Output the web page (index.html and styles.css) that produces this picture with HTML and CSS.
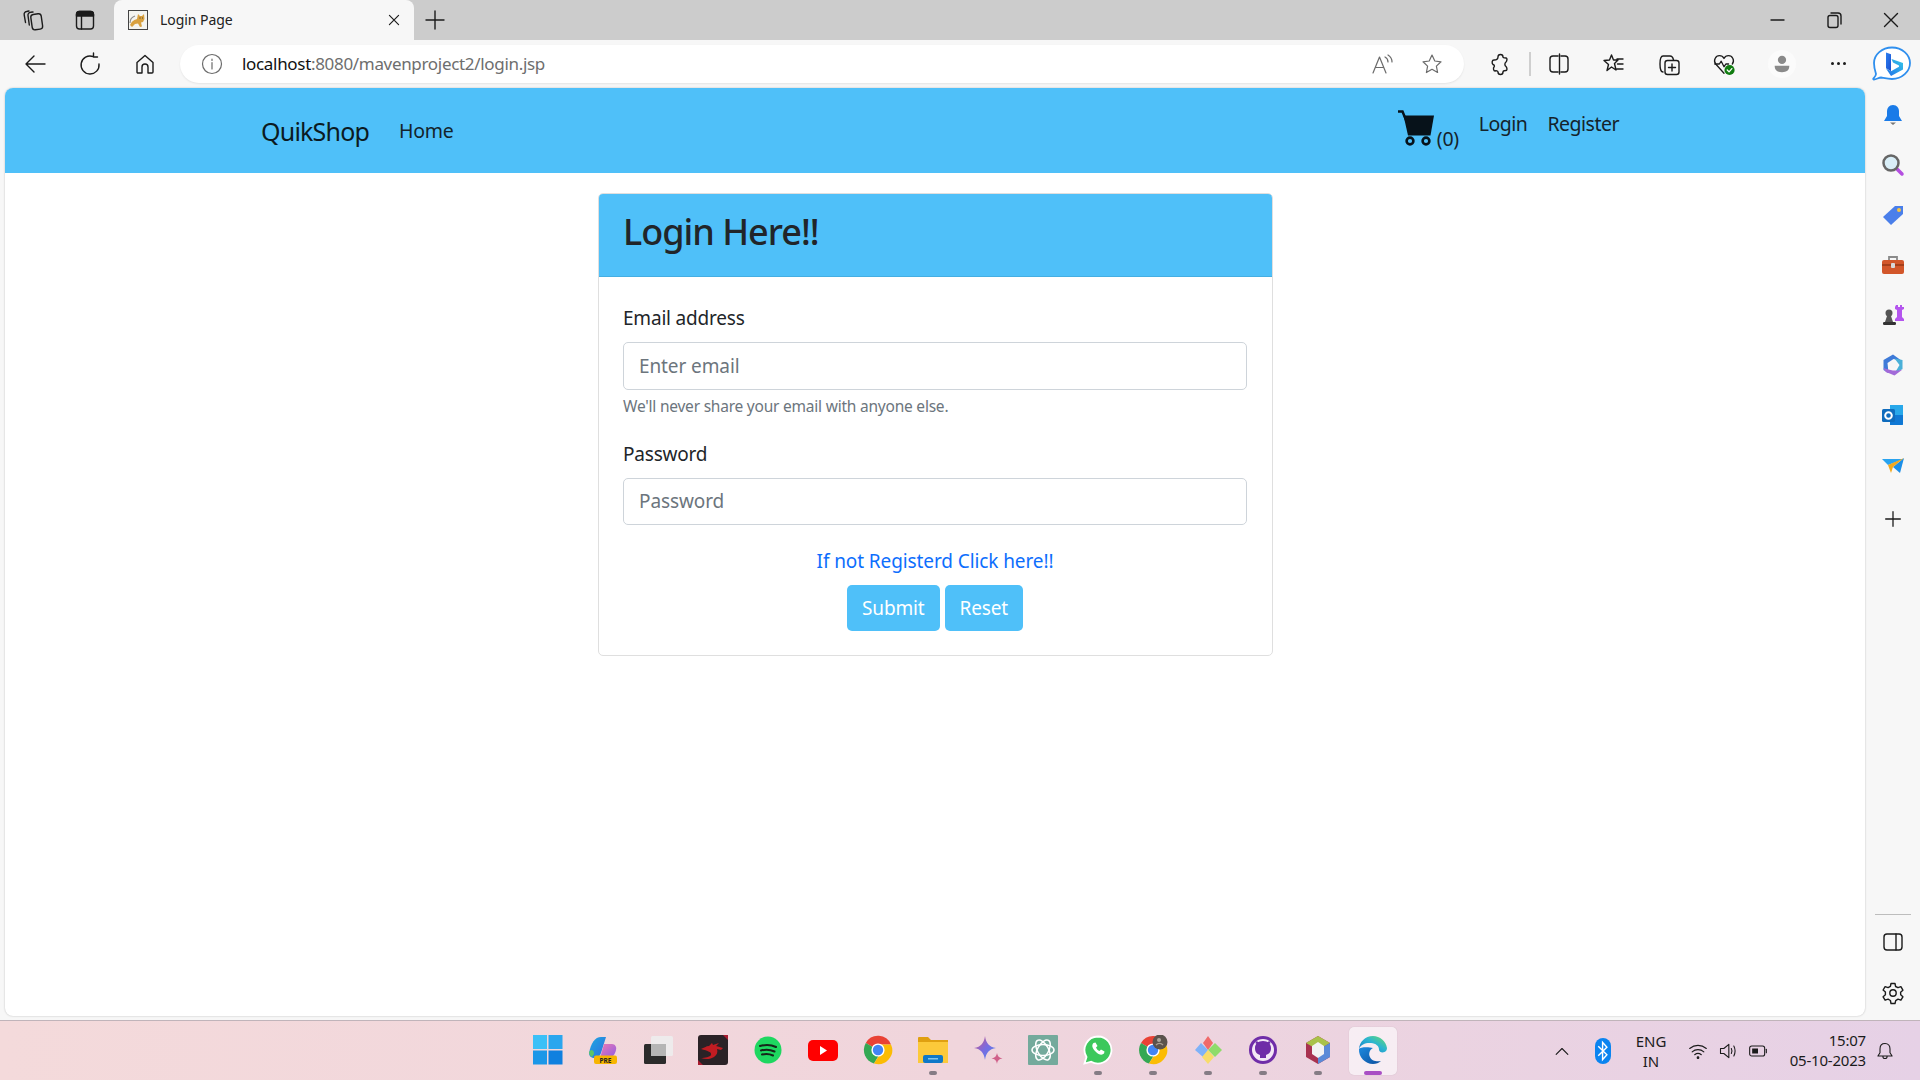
FILE: index.html
```html
<!DOCTYPE html>
<html lang="en">
<head>
    <meta charset="UTF-8">
    <meta name="viewport" content="width=device-width, initial-scale=1.0">
    <title>Login Page</title>
    <link rel="stylesheet" href="styles.css">
</head>
<body>
    <!-- Tab strip -->
    <div class="tabstrip">
        <div class="tab-tools">
            <svg class="ico" viewBox="0 0 24 24"><rect x="10.500" y="6" width="10.500" height="15.500" rx="2.800" transform="rotate(-8 16 14)"/><path d="M12 4 9.500 4.300A2.800 2.800 0 0 0 7 7.500l1.300 9.500"/><path d="M8 3 5.500 3.500A2.800 2.800 0 0 0 3.200 6.800l1.300 7.700"/></svg>
            <svg class="ico" viewBox="0 0 24 24"><rect x="3.500" y="3.500" width="17" height="17.500" rx="3"/><path d="M6.500 3.500h11a3 3 0 0 1 3 3V8h-17V6.500a3 3 0 0 1 3-3z" fill="#1b1b1b"/><path d="M8.500 8v13"/></svg>
        </div>
        <div class="tab">
            <svg class="favicon" viewBox="0 0 20 20"><rect x=".5" y=".5" width="19" height="19" fill="#f4f4f0" stroke="#444"/><path d="M2 15c2-4 4-5 7-6l1-5 2 2h2l2-2 .5 5-1.500 3-2 .5 1 4-2 .5-2-3.500-3 .5-3 3z" fill="#d9a13f"/><path d="M2 13c0-4 2-6 5-7" fill="none" stroke="#8c8c8c" stroke-width="1.200"/><path d="M11.500 8h1M14 8h.8" stroke="#333"/></svg>
            <span class="tab-title">Login Page</span>
            <svg class="ico tab-close" viewBox="0 0 24 24"><path d="m6.500 6.500 11 11M17.500 6.500l-11 11"/></svg>
        </div>
        <svg class="ico tab-new" viewBox="0 0 24 24"><path d="M12 3v18M3 12h18"/></svg>
        <div class="win-controls">
            <svg class="ico" viewBox="0 0 24 24"><path d="M6 12h13"/></svg>
            <svg class="ico" viewBox="0 0 24 24"><rect x="6" y="7.500" width="10" height="12" rx="2"/><path d="M9 5h7a3 3 0 0 1 3 3v8"/></svg>
            <svg class="ico" viewBox="0 0 24 24"><path d="m5.500 5.500 13 13M18.500 5.500l-13 13"/></svg>
        </div>
    </div>

    <!-- Toolbar -->
    <div class="toolbar">
        <div class="nav-btns">
            <svg class="ico" viewBox="0 0 24 24"><path d="M22 12H3M11 4l-8 8 8 8"/></svg>
            <svg class="ico" viewBox="0 0 24 24"><path d="M15 4.500a9 9 0 1 0 6 7.500M15.500 1v4h4"/></svg>
            <svg class="ico" viewBox="0 0 24 24"><path d="M4 10.500 12 3.500l8 7V20a1 1 0 0 1-1 1h-4v-6a3 3 0 0 0-6 0v6H5a1 1 0 0 1-1-1z"/></svg>
        </div>
        <div class="addressbar">
            <svg class="ico ico-grey info" viewBox="0 0 24 24"><circle cx="12" cy="12" r="9.500"/><path d="M12 10.500V17M12 7v1.500"/></svg>
            <span class="url"><span class="url-host">localhost</span>:8080/mavenproject2/login.jsp</span>
            <svg class="ico ico-grey" viewBox="0 0 24 24"><path d="m3 21 6.500-16L16 21M5.500 15.500h8"/><path d="M15 5c2 1 3 3 3 5M18 3c2.500 1.500 4 4 4 7"/></svg>
            <svg class="ico ico-grey star" viewBox="0 0 24 24"><path d="m12 3 2.800 6 6.200.8-4.600 4.300 1.200 6.400-5.600-3.200-5.600 3.200 1.200-6.400L3 9.800 9.200 9z"/></svg>
        </div>
        <div class="tool-btns">
            <svg class="ico" viewBox="0 0 24 24"><path d="M10 5a2.500 2.500 0 0 1 5 0c0 1 2 1 3 1 1.500 0 1 3 0 4-1.500 1-1.500 3.500 0 4.500 1 1 1.500 4 0 4-1.500 0-3 .5-3 1.500a2.500 2.500 0 0 1-5 0c0-1-2-1.500-3-1-1.500 0-2-3-1-4 1-1.200 0-2-1-2.500-1.500-1.500-1-4.500 1-4.500 1.500 0 4 0 4-3z"/></svg>
            <span class="tool-sep"></span>
            <svg class="ico" viewBox="0 0 24 24"><path d="M11 4H6a3 3 0 0 0-3 3v10a3 3 0 0 0 3 3h5M14 4h4a3 3 0 0 1 3 3v10a3 3 0 0 1-3 3h-4M12.500 2v20"/></svg>
            <svg class="ico" viewBox="0 0 24 24"><path d="m9.500 3 2 5H16l-3.500 3.500L14 18l-4.500-3L5 18.500l1.500-6L2 8.500l5.500-.5zM15 7h6M15.500 12h5.500M15 17h6"/></svg>
            <svg class="ico" viewBox="0 0 24 24"><path d="M6 20c-2 0-3-3-3-8 0-5 1-8 3-8h7c2 0 3 1.500 3.500 4"/><rect x="8" y="8.500" width="14" height="14" rx="2.500"/><path d="M15 12v7M11.500 15.500h7"/></svg>
            <svg class="ico" viewBox="0 0 26 26"><path d="M13 23 4 13C1 9 4 4 8 4c2 0 4 1 5 3 1-2 3-3 5-3 4 0 7 5 4 9"/><path d="M3 13h5l2-3 3 6 2-3h3"/><circle cx="19" cy="19.500" r="5.500" fill="#107c10" stroke="none"/><path d="m16.500 19.500 2 2 3-3.500" stroke="#fff"/></svg>
            <span class="avatar"><svg viewBox="0 0 24 24"><circle cx="12" cy="7.500" r="4.500" fill="#8a8a8a"/><path d="M4 14h16c0 5-3 7-8 7s-8-2-8-7z" fill="#8a8a8a"/></svg></span>
            <span class="more"><i></i><i></i><i></i></span>
        </div>
        <svg class="bing" viewBox="0 0 40 36"><defs><linearGradient id="bingB" x1="0" y1="0" x2="1" y2="1"><stop offset="0" stop-color="#2a7ff0"/><stop offset="1" stop-color="#1a4fd0"/></linearGradient><linearGradient id="bingW" x1="0" y1="1" x2="1" y2="0"><stop offset="0" stop-color="#1f6fe8"/><stop offset="1" stop-color="#35c8e8"/></linearGradient></defs><path d="M20 1.500c10 0 18 7 18 15.500s-8 16-18 16c-4 0-8-1-11-1.500-2 0-5 2-7 2-.8 0-1-.6-.5-1.200 1.500-1.500 2.500-3 2.500-4.300C3 25 2 21 2 17 2 8.500 10 1.500 20 1.500z" fill="#fff" stroke="#2f8fee" stroke-width="1.800"/><path d="M14 6.500l5 1.800v17l-5-3z" fill="url(#bingB)"/><path d="M19 25.300l8-4.600v-1.200l-6-3 -1.500-3.500 11.500 4v6.500L19 30l-5-7.500z" fill="url(#bingW)"/></svg>
    </div>

    <!-- Page + sidebar -->
    <div class="workspace">
        <div class="page">
            <nav class="navbar">
                <div class="nav-left">
                    <a class="brand" href="#">QuikShop</a>
                    <a class="nav-link" href="#">Home</a>
                </div>
                <div class="nav-right">
                    <a class="cart" href="#">
                        <svg class="cart-ico" viewBox="0 0 36 36"><path d="M0 1.500h4.500L8 10" fill="none" stroke="#07121a" stroke-width="2.500"/><path d="M5.500 5.500H36L32.500 25.500H10z" fill="#07121a"/><circle cx="12" cy="31" r="3.400" fill="none" stroke="#07121a" stroke-width="2.600"/><circle cx="28" cy="31" r="3.400" fill="none" stroke="#07121a" stroke-width="2.600"/></svg>
                        <span class="cart-count">(0)</span>
                    </a>
                    <a class="nav-link" href="#">Login</a>
                    <a class="nav-link" href="#">Register</a>
                </div>
            </nav>

            <div class="card">
                <div class="card-header">
                    <h2>Login Here!!</h2>
                </div>
                <form class="card-body">
                    <div class="form-group">
                        <label class="form-label" for="email">Email address</label>
                        <input class="form-control" type="email" id="email" placeholder="Enter email">
                        <small class="form-text">We'll never share your email with anyone else.</small>
                    </div>
                    <div class="form-group">
                        <label class="form-label" for="password">Password</label>
                        <input class="form-control" type="password" id="password" placeholder="Password">
                    </div>
                    <div class="register-link"><a href="#">If not Registerd Click here!!</a></div>
                    <div class="form-actions">
                        <button class="btn" type="submit">Submit</button>
                        <button class="btn" type="reset">Reset</button>
                    </div>
                </form>
            </div>
        </div>

        <aside class="sidebar">
            <div class="side-apps">
                <svg class="side-ico" viewBox="0 0 24 24"><path d="M12 2c-4 0-6 3-6 6.500V13l-3 5h18l-3-5V8.500C18 5 16 2 12 2z" fill="#1a7be8"/><path d="M9 19.500h6l-3 2.500z" fill="#777"/></svg>
                <svg class="side-ico" viewBox="0 0 24 24"><path d="m15 15 6 6" stroke="#b44fe0" stroke-width="3.500" stroke-linecap="round"/><circle cx="10" cy="10" r="7.500" fill="#d9eef7" stroke="#666" stroke-width="2.500"/></svg>
                <svg class="side-ico" viewBox="0 0 24 24"><path d="M2 14 14 3h8v8L10 22z" fill="#4a7fea"/><circle cx="18" cy="7" r="2" fill="#f6c544"/></svg>
                <svg class="side-ico" viewBox="0 0 24 24"><path d="M8 7V4h8v3" fill="none" stroke="#8a8a8a" stroke-width="1.800"/><rect x="1" y="7" width="22" height="14" rx="2" fill="#d2562a"/><path d="M1 11h22v2H1z" fill="#a63f1a"/><rect x="10" y="10" width="4" height="5" rx="1" fill="#d8d8d8"/></svg>
                <svg class="side-ico" viewBox="0 0 24 24"><path d="M15 2h2v2h2V2h2v2h2v2l-2 1v7l2 2v2h-9v-2l2-2V7l-2-1V4z" fill="#b455ee"/><circle cx="8" cy="10" r="3.500" fill="#555"/><path d="M6 13h4l2 6H4z" fill="#555"/><rect x="2" y="19" width="13" height="3" rx="1.200" fill="#333"/></svg>
                <svg class="side-ico" viewBox="0 0 24 24"><path d="M12 1.500 2.500 7v10l5 3-1-10 6-4 8.500 2z" fill="#3e7ad8"/><path d="m21.500 7-8-1.500 5 6.500-5 8.500 8-4.500z" fill="#4ab0d8"/><path d="M2.500 15c1 3 3 5 5 5l6 2.500 8-6c-5 2-13 1-19-1.500z" fill="#a26ad8"/><circle cx="12" cy="12" r="3.500" fill="#f5f5f5"/></svg>
                <svg class="side-ico" viewBox="0 0 24 24"><path d="M9 2h13v19a1 1 0 0 1-1 1H9z" fill="#28a8ea"/><path d="m9 12 13 0v9a1 1 0 0 1-1 1H9z" fill="#0f78d4"/><rect x="1" y="6" width="13" height="13" rx="1.500" fill="#0f6cbd"/><circle cx="7.500" cy="12.500" r="3.300" fill="none" stroke="#fff" stroke-width="2"/></svg>
                <svg class="side-ico" viewBox="0 0 24 24"><path d="M1 6h22L7 12z" fill="#29a3ef"/><path d="m23 5-4 15-7-6z" fill="#1c8fe8"/><path d="m23 5-16 7 3 8 2-6z" fill="#f2a91e"/></svg>
                <svg class="ico side-plus" viewBox="0 0 24 24"><path d="M12 4v16M4 12h16"/></svg>
            </div>
            <div class="side-bottom">
                <span class="side-sep"></span>
                <svg class="ico" viewBox="0 0 24 24"><rect x="3" y="4" width="18" height="16" rx="3"/><path d="M15 4v16"/></svg>
                <svg class="ico" viewBox="0 0 24 24"><circle cx="12" cy="12" r="3.200"/><path d="M10 2.500h4l.6 3 2.400 1.200 2.900-1 2 3.500-2.300 2 .1 2.600 2.200 2-2 3.400-2.900-1-2.300 1.400-.7 2.900h-4l-.6-3-2.300-1.300-3 1-2-3.400 2.300-2V11L2.100 9l2-3.400 3 1L9.400 5.300z"/></svg>
            </div>
        </aside>
    </div>

    <!-- Windows taskbar -->
    <footer class="taskbar">
        <div class="task-spacer"></div>
        <div class="task-apps">
            <div class="task-app"><svg viewBox="0 0 30 30"><rect width="14" height="14" fill="#3cc0f7"/><rect x="15.500" width="14" height="14" fill="#2aa6ee"/><rect y="15.500" width="14" height="14" fill="#1c97e8"/><rect x="15.500" y="15.500" width="14" height="14" fill="#0f80df"/></svg></div>
            <div class="task-app"><svg viewBox="0 0 30 30"><defs><linearGradient id="copA" x1="0" y1="0" x2="1" y2="1"><stop offset="0" stop-color="#1fa8e0"/><stop offset="1" stop-color="#2f6fe0"/></linearGradient><linearGradient id="copB" x1="0" y1="0" x2="1" y2="1"><stop offset="0" stop-color="#f07ab0"/><stop offset="1" stop-color="#8c5ce8"/></linearGradient></defs><path d="M1 18C3 8 7 2 13 2h5l-5 16c-1 3-3 5-6 5-4 0-6-2-6-5z" fill="url(#copA)"/><path d="M3 15c2 0 3 1 3 4l-2 3c-2-1-3-3-3-5z" fill="#5cc46a"/><path d="M16 9h8c3 0 5 3 4 6-1 5-4 8-9 8h-7z" fill="url(#copB)"/><rect x="6" y="20.500" width="23" height="8.500" rx="2" fill="#f7b500"/><text class="pre" x="17.500" y="27.600" text-anchor="middle">PRE</text></svg></div>
            <div class="task-app"><svg viewBox="0 0 30 30"><rect x="1" y="9" width="22" height="20" rx="1.500" fill="#2b2b2b"/><rect x="8" y="1" width="22" height="20" rx="1.500" fill="#ededed" fill-opacity=".9"/><rect x="8" y="9" width="15" height="12" fill="#b5b5b5"/></svg></div>
            <div class="task-app"><svg viewBox="0 0 30 30"><rect width="30" height="30" rx="3" fill="#2a2226"/><path d="M3 14c3-1 5-3 8-3l3-3 1 2 6-2-3 3 7 2-2 2-4-1c1 3 0 6-3 8-3 2-8 3-13 1 4 0 9-1 10-3 1-3-3-4-10-6z" fill="#c01c22"/><path d="M25 0h5v5zM0 25l5 5H0z" fill="#a81c30"/></svg></div>
            <div class="task-app"><svg viewBox="0 0 30 30"><circle cx="15" cy="15" r="13.500" fill="#1ed760"/><path d="M7 11c6-1.800 11-1.500 16 1M8 15.500c5-1.500 9-1.200 13.500 1M9 19.500c4-1 7.500-.8 11 1" fill="none" stroke="#16251a" stroke-width="2" stroke-linecap="round"/></svg></div>
            <div class="task-app"><svg viewBox="0 0 30 30"><rect y="5" width="30" height="21" rx="5" fill="#f00"/><path d="m12 11 7 4.500-7 4.500z" fill="#fff"/></svg></div>
            <div class="task-app"><svg viewBox="0 0 30 30"><path d="M15 15 2.800 8A14 14 0 0 1 28 9.500H15z" fill="#e94235"/><path d="M15 15 2.800 8A14 14 0 0 0 11 28.500l6-10z" fill="#34a853"/><path d="M15 9.500h13A14 14 0 0 1 11 28.500l7-11z" fill="#fbbc04"/><circle cx="15" cy="15" r="6.600" fill="#fff"/><circle cx="15" cy="15" r="5.200" fill="#4285f4"/></svg></div>
            <div class="task-app task-app-open"><svg viewBox="0 0 30 30"><path d="M0 3a1 1 0 0 1 1-1h9l3 3h17v5H0z" fill="#e0a010"/><path d="M0 7h30v21H0z" fill="#fcc93a"/><rect x="5" y="20" width="20" height="8" rx="2" fill="#0f78c8"/><rect x="10" y="23" width="10" height="1.500" fill="#7fc4ee"/></svg></div>
            <div class="task-app"><svg viewBox="0 0 30 30"><defs><linearGradient id="gem" x1="0" y1="0" x2="1" y2="1"><stop offset="0" stop-color="#d8587a"/><stop offset=".5" stop-color="#7a6be0"/><stop offset="1" stop-color="#4a8af0"/></linearGradient></defs><path d="M12 1c1 7 4 11 11 12-7 1-10 5-11 12-1-7-4-11-11-12 7-1 10-5 11-12z" fill="url(#gem)"/><path d="M24 18c.5 3 2 5 5.500 5.500-3.500.5-5 2-5.500 5.500-.5-3.500-2-5-5.500-5.500 3.500-.5 5-2.500 5.500-5.500z" fill="#d0608a"/></svg></div>
            <div class="task-app"><svg viewBox="0 0 30 30"><rect width="30" height="30" rx="1" fill="#74aa9c"/><g fill="none" stroke="#fff" stroke-width="1.500"><ellipse cx="15" cy="15" rx="11" ry="5.500"/><ellipse cx="15" cy="15" rx="11" ry="5.500" transform="rotate(60 15 15)"/><ellipse cx="15" cy="15" rx="11" ry="5.500" transform="rotate(120 15 15)"/></g></svg></div>
            <div class="task-app task-app-open"><svg viewBox="0 0 30 30"><path d="M15 1.500a13.500 13.500 0 0 0-11.500 20.500L1.500 28.500l6.700-1.800A13.500 13.500 0 1 0 15 1.500z" fill="#3cc85c" stroke="#fff" stroke-width="1.800"/><path d="M10.500 8c-2 2-1.500 5 2 8.500s6.500 4 8.500 2l.5-2-3.500-2-1.500 1.500c-1.500-.5-3-2-3.500-3.500l1.500-1.500-2-3.500z" fill="#fff"/></svg></div>
            <div class="task-app task-app-open"><svg viewBox="0 0 30 30"><path d="M15 15 3 8A14 14 0 0 1 28 9.500H15z" fill="#e94235"/><path d="M15 15 3 8A14 14 0 0 0 11 28.500l6-10z" fill="#34a853"/><path d="M15 9.500h13A14 14 0 0 1 11 28.500l7-11z" fill="#fbbc04"/><circle cx="15" cy="15" r="6.600" fill="#fff"/><circle cx="15" cy="15" r="5.200" fill="#4285f4"/><circle cx="22" cy="7" r="7.500" fill="#5a524c"/><circle cx="21" cy="5" r="2" fill="#b0a89c"/><path d="M18 10c2-2 5-2 7 0" stroke="#a89c90" stroke-width="1.500" fill="none"/></svg></div>
            <div class="task-app task-app-open"><svg viewBox="0 0 30 30"><path d="m15 1 5 7-5 7-5-7z" fill="#f06a6a"/><path d="m8 8 7 7-5 7-8-7z" fill="#7fb2f8"/><path d="m22 8 7 7-7 7-7-7z" fill="#8edc6a"/><path d="m15 15 6 7-6 7-6-7z" fill="#f8dc6a"/></svg></div>
            <div class="task-app task-app-open"><svg viewBox="0 0 30 30"><circle cx="15" cy="15" r="14" fill="#6f2da8"/><circle cx="15" cy="15" r="11" fill="#f3e8f5"/><path d="M15 6c-5 0-8 3-8 7 0 4 2 6 5 7v3h6v-3c3-1 5-3 5-7 0-4-3-7-8-7z" fill="#6f2da8"/><path d="M8 7l3 2M22 7l-3 2" stroke="#6f2da8" stroke-width="2.500"/></svg></div>
            <div class="task-app task-app-open"><svg viewBox="0 0 30 30"><path d="m15 1 12 7v14l-12 7L3 22V8z" fill="#a83250"/><path d="m15 1 12 7-12 7L3 8z" fill="#a9c24a"/><path d="m27 8v14l-12 7V15z" fill="#5a8ad8"/><path d="m15 7 6 4v8l-6 4-6-4v-8z" fill="#f2f2f2"/></svg></div>
            <div class="task-app task-app-active"><svg viewBox="0 0 30 30"><defs><linearGradient id="edgeTop" x1="0" y1="1" x2="1" y2="0"><stop offset="0" stop-color="#1577c8"/><stop offset=".55" stop-color="#2cb5d0"/><stop offset="1" stop-color="#6ade6a"/></linearGradient><linearGradient id="edgeLow" x1="0" y1="0" x2="1" y2="1"><stop offset="0" stop-color="#1d8be0"/><stop offset="1" stop-color="#0c4f9e"/></linearGradient></defs><path d="M15 1C7 1 1.500 7 1 14c2-5 7-6.500 12-6 5 .5 8 3 8 6.500 0 2.500 3 3.500 5.500 2.500 2-1 2.500-2.500 2.500-4C28 6 22 1 15 1z" fill="url(#edgeTop)"/><path d="M1 14c-.5 8 6 15 14 15 3 0 6-1 8-3-4 1-10 0-11.500-5-1-3.500 1-7 3.500-8-5-1.500-13-1-14 1z" fill="url(#edgeLow)"/></svg></div>
        </div>
        <div class="tray">
            <svg class="ico ico-tray" viewBox="0 0 24 24"><path d="m5 16 7-7 7 7"/></svg>
            <span class="bluetooth"><svg viewBox="0 0 14 24"><path d="m3 7.500 8 8L7 20V4l4 4.500-8 8" fill="none" stroke="#fff" stroke-width="1.300"/></svg></span>
            <div class="lang"><span>ENG</span><span>IN</span></div>
            <div class="tray-status">
                <svg class="ico ico-tray" viewBox="0 0 24 24"><path d="M2 9c6-5 14-5 20 0M5 13c4-3.500 10-3.500 14 0M8 16.500c2.500-2 5.500-2 8 0"/><circle cx="12" cy="20" r="1" fill="#1b1b1b"/></svg>
                <svg class="ico ico-tray" viewBox="0 0 24 24"><path d="M3 9v6h4l6 5V4L7 9zM16 9c1 2 1 4 0 6M19 6c2 4 2 8 0 12"/></svg>
                <svg class="ico ico-tray" viewBox="0 0 24 24"><rect x="2" y="6" width="18" height="12" rx="2.500"/><rect x="5" y="9" width="7" height="6" fill="#1b1b1b" stroke="none"/><path d="M22 10v4"/></svg>
            </div>
            <div class="clock"><span>15:07</span><span>05-10-2023</span></div>
            <svg class="ico ico-tray" viewBox="0 0 24 24"><path d="M12 3c-4 0-6 3-6 6.500V14l-2.500 4h17L18 14V9.500C18 6 16 3 12 3zM9.500 18.500a2.500 2.500 0 0 0 5 0"/></svg>
        </div>
    </footer>
</body>
</html>
```

FILE: styles.css
```css
* {
    box-sizing: border-box;
}

html, body {
    height: 100%;
}

body {
    margin: 0;
    display: flex;
    flex-direction: column;
    height: 1080px;
    overflow: hidden;
    background-color: #f7f7f7;
    font-family: "Noto Sans", Arial, sans-serif;
    color: #212529;
}

a {
    text-decoration: none;
}

.ico {
    width: 24px;
    height: 24px;
    flex: none;
    fill: none;
    stroke: #1b1b1b;
    stroke-width: 1.4;
    stroke-linejoin: round;
    stroke-linecap: round;
}

.ico-grey {
    stroke: #6b6b6b;
    stroke-width: 1.2;
}

/* Tab strip */
.tabstrip {
    height: 40px;
    flex: none;
    display: flex;
    align-items: center;
    background-color: #cccccc;
}

.tab-tools {
    display: flex;
    width: 114px;
    padding-left: 21px;
    gap: 28px;
}

.tab {
    width: 300px;
    height: 40px;
    display: flex;
    align-items: center;
    padding-left: 14px;
    background-color: #f7f7f7;
    border-radius: 8px 8px 0 0;
}

.favicon {
    width: 20px;
    height: 20px;
    margin-right: 12px;
}

.tab-title {
    flex: 1;
    padding-bottom: 2px;
    font-size: 14px;
    letter-spacing: -0.05px;
    color: #222;
}

.tab-close {
    width: 20px;
    height: 20px;
    margin-right: 10px;
}

.tab-new {
    margin-left: 9px;
}

.win-controls {
    margin-left: auto;
    display: flex;
    gap: 33px;
    padding-right: 17px;
}

/* Toolbar */
.toolbar {
    height: 48px;
    flex: none;
    display: flex;
    align-items: center;
    padding-bottom: 1px;
    background-color: #f7f7f7;
}

.nav-btns {
    width: 180px;
    display: flex;
    gap: 31px;
    padding-left: 23px;
}

.addressbar {
    width: 1284px;
    height: 38px;
    margin-top: 1px;
    display: flex;
    align-items: center;
    padding: 0 20px 0 20px;
    background-color: #fff;
    border-radius: 19px;
    box-shadow: 0 1px 2px rgba(0, 0, 0, 0.08);
}

.info {
    margin-right: 18px;
}

.url {
    flex: 1;
    padding-bottom: 2px;
    font-size: 17px;
    letter-spacing: -0.32px;
    color: #6e6e6e;
}

.url-host {
    color: #111;
}

.addressbar .star {
    margin-left: 26px;
}

.tool-btns {
    display: flex;
    align-items: center;
    padding-left: 24px;
    gap: 31px;
}

.tool-sep {
    width: 2px;
    height: 24px;
    margin: 0 -15px 0 -14px;
    background-color: #cfcfcf;
}

.avatar {
    width: 28px;
    height: 28px;
    margin-left: 1px;
    border-radius: 50%;
    background-color: #fbfbfb;
    display: flex;
    padding: 3px;
}

.more {
    display: flex;
    gap: 3px;
    margin-left: 4px;
}

.more i {
    width: 3px;
    height: 3px;
    border-radius: 50%;
    background-color: #1b1b1b;
}

.bing {
    width: 40px;
    height: 36px;
    margin-left: auto;
    margin-right: 8px;
}

/* Page area */
.workspace {
    flex: 1;
    display: flex;
    padding-left: 5px;
    padding-bottom: 4px;
}

.page {
    width: 1860px;
    background-color: #fff;
    border-radius: 8px;
    overflow: hidden;
    box-shadow: 0 0 2px rgba(0, 0, 0, 0.25);
}

.navbar {
    height: 85px;
    display: flex;
    justify-content: space-between;
    padding: 0 236px 0 256px;
    background-color: #4fc0f9;
}

.nav-left {
    display: flex;
    align-items: center;
}

.brand {
    font-size: 25px;
    letter-spacing: -0.8px;
    color: #0b1a22;
    margin-right: 20px;
}

.nav-link {
    padding: 0 10px;
    font-size: 19.500px;
    letter-spacing: -0.3px;
    color: #14232b;
}

.nav-right {
    display: flex;
    align-items: flex-start;
    padding-top: 21px;
}

.nav-right .nav-link {
    letter-spacing: -0.5px;
    line-height: 30px;
}

.cart {
    display: flex;
    align-items: flex-end;
    margin-top: 1px;
    margin-right: 10px;
    color: #14232b;
}

.cart-ico {
    width: 36px;
    height: 36px;
}

.cart-count {
    margin-left: 3px;
    margin-bottom: -6px;
    font-size: 19.500px;
    letter-spacing: -0.3px;
    line-height: 26px;
}

/* Login card */
.card {
    width: 675px;
    margin: 20px auto 0;
    background-color: #fff;
    border: 1px solid #dfdfdf;
    border-radius: 5px;
    overflow: hidden;
}

.card-header {
    height: 83px;
    padding: 10px 24.500px;
    background-color: #4fc0f9;
    border-bottom: 1px solid #45aee2;
}

.card-header h2 {
    margin: 0;
    font-size: 36px;
    font-weight: 500;
    letter-spacing: -1px;
    line-height: 55px;
    color: #212529;
}

.card-body {
    display: block;
    padding: 26px 24.500px 24px;
}

.form-group {
    margin-bottom: 19px;
}

.form-label {
    display: block;
    margin-bottom: 9px;
    font-size: 19px;
    letter-spacing: -0.2px;
    line-height: 30px;
}

.form-control {
    display: block;
    width: 100%;
    height: 47.5px;
    padding: 7.5px 15px;
    font-family: inherit;
    font-size: 19px;
    letter-spacing: -0.1px;
    color: #495057;
    background-color: #fff;
    border: 1px solid #ced4da;
    border-radius: 5px;
}

.form-control::placeholder {
    color: #6c757d;
    opacity: 1;
}

.form-text {
    display: block;
    margin-top: 3px;
    font-size: 15.500px;
    letter-spacing: -0.22px;
    line-height: 26px;
    color: #6c757d;
}

.form-group:first-child {
    margin-bottom: 20px;
}

.register-link {
    margin-top: 21px;
    text-align: center;
    line-height: 30px;
    font-size: 19px;
    letter-spacing: -0.1px;
}

.register-link a {
    color: #0d6efd;
}

.form-actions {
    display: flex;
    justify-content: center;
    gap: 5px;
    margin-top: 9px;
}

.btn {
    height: 46px;
    padding: 0 15px;
    font-family: inherit;
    font-size: 19px;
    letter-spacing: -0.15px;
    color: #fff;
    background-color: #4fc0f9;
    border: none;
    border-radius: 5px;
}

/* Right sidebar */
.sidebar {
    flex: 1;
    display: flex;
    flex-direction: column;
    justify-content: space-between;
    align-items: center;
}

.side-apps {
    display: flex;
    flex-direction: column;
    align-items: center;
    padding-top: 15px;
    gap: 26px;
}

.side-ico {
    width: 24px;
    height: 24px;
}

.side-plus {
    width: 22px;
    height: 22px;
    margin-top: 5px;
}

.side-bottom {
    display: flex;
    flex-direction: column;
    align-items: center;
    gap: 27px;
    padding-bottom: 11px;
}

.side-sep {
    width: 36px;
    height: 1px;
    margin-bottom: -12px;
    background-color: #bdbdbd;
}

/* Taskbar */
.taskbar {
    height: 60px;
    flex: none;
    display: grid;
    grid-template-columns: 1fr auto 1fr;
    align-items: center;
    background: linear-gradient(to right, #f4dadb, #f0d5dc 50%, #e6d1e6);
    border-top: 1px solid #c0b4ba;
}

.task-apps {
    display: flex;
}

.task-app {
    position: relative;
    width: 55px;
    height: 48px;
    display: flex;
    align-items: center;
    justify-content: center;
    border-radius: 5px;
}

.task-app svg {
    width: 30px;
    height: 30px;
    margin-bottom: 1px;
}

.task-app .pre {
    font-family: "Noto Sans", Arial, sans-serif;
    font-size: 6.500px;
    font-weight: 700;
    fill: #222;
}

.task-app-open::after,
.task-app-active::after {
    content: "";
    position: absolute;
    left: 50%;
    bottom: 0;
    width: 8px;
    height: 4px;
    margin-left: -4px;
    border-radius: 2px;
    background-color: #857c85;
}

.task-app-active {
    width: 48px;
    margin: 0 3.500px;
    background-color: rgba(255, 255, 255, 0.6);
    box-shadow: 0 0 1px rgba(0, 0, 0, 0.2);
}

.task-app-active::after {
    width: 18px;
    margin-left: -9px;
    background-color: #a94fc4;
}

.tray {
    display: flex;
    align-items: center;
    justify-content: flex-end;
    padding-right: 25px;
    font-size: 15px;
    color: #1b1b1b;
}

.ico-tray {
    width: 20px;
    height: 20px;
    stroke-width: 1.3;
}

.bluetooth {
    width: 16px;
    height: 26px;
    margin-left: 23px;
    display: flex;
    border-radius: 8px;
    background-color: #0a84f0;
}

.lang {
    display: flex;
    flex-direction: column;
    align-items: center;
    width: 40px;
    margin-left: 20px;
    line-height: 20px;
}

.tray-status {
    display: flex;
    gap: 10px;
    margin-left: 17px;
}

.clock {
    display: flex;
    flex-direction: column;
    align-items: flex-end;
    width: 98px;
    padding-bottom: 2px;
    line-height: 20px;
    margin-right: 9px;
    letter-spacing: -0.2px;
}
```
